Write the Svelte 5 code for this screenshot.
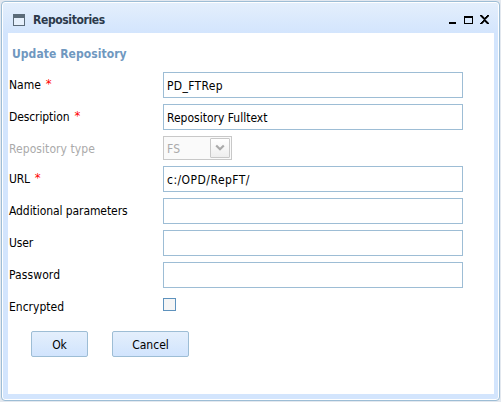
<script>
  const rows = [
    { label: 'Name', required: true, value: 'PD_FTRep', ls: 0, vs: 0.35 },
    { label: 'Description', required: true, value: 'Repository Fulltext', ls: -0.1, vs: 0 },
    { label: 'Repository type', kind: 'select', value: 'FS', ls: 0.07, vs: 0.3 },
    { label: 'URL', required: true, value: 'c:/OPD/RepFT/', ls: -0.2, vs: 0.47 },
    { label: 'Additional parameters', value: '', ls: -0.08, vs: 0 },
    { label: 'User', value: '', ls: -0.1, vs: 0 },
    { label: 'Password', value: '', ls: 0.1, vs: 0 },
    { label: 'Encrypted', kind: 'check', ls: 0, vs: 0 }
  ];
</script>

<div class="page">
  <div class="window">
    <header>
      <svg class="app" width="12" height="12" shape-rendering="crispEdges"><rect width="12" height="12" fill="#5b6b79"/><rect x="1" y="4" width="10" height="7" fill="#e6f0fc"/></svg>
      <span class="title">Repositories</span>
      <svg class="controls" width="40" height="9" shape-rendering="crispEdges">
        <path d="M0 7h7v2H0z" fill="#000"/>
        <path fill-rule="evenodd" d="M15 1h9v8h-9zM16 3v5h7V3z" fill="#000"/>
        <path d="M31 0h2v1h1v1h1v1h1v-1h1v-1h1v-1h2v1h-1v1h-1v1h-1v1h-1v1h1v1h1v1h1v1h1v1h-2v-1h-1v-1h-1v-1h-1v1h-1v1h-1v1h-2v-1h1v-1h1v-1h1v-1h1v-1h-1v-1h-1v-1h-1v-1h-1z" fill="#000" stroke="#000" stroke-width=".4"/>
      </svg>
    </header>
    <main>
      <h1>Update Repository</h1>
      <div class="form">
        {#each rows as r}
          <div class="row {r.kind ?? 'text'}">
            <div class="label"><span style:letter-spacing="{r.ls}px">{r.label}</span>{#if r.required}<span class="star">*</span>{/if}</div>
            {#if r.kind === 'select'}
              <div class="combo"><span style:letter-spacing="{r.vs}px">{r.value}</span><i><svg width="10" height="8"><path d="M1.2 1.5L5 5.3L8.800 1.5" fill="none" stroke="#aaa" stroke-width="2.2"/></svg></i></div>
            {:else if r.kind === 'check'}
              <div class="box"></div>
            {:else}
              <div class="field" style:letter-spacing="{r.vs}px">{r.value}</div>
            {/if}
          </div>
        {/each}
      </div>
      <div class="buttons"><button class="ok">Ok</button><button class="cancel">Cancel</button></div>
    </main>
  </div>
</div>

<style>
  .page { box-sizing: border-box; width: 501px; height: 402px; padding: 1px; background: #e3e8ef; overflow: hidden; font: 12px "DejaVu Sans Condensed", "DejaVu Sans", sans-serif; font-stretch: condensed; color: #000; }
  .window { box-sizing: border-box; height: 400px; border: 1px solid #9dbdd5; border-radius: 4px; padding: 0 4px 5px 6px; background: linear-gradient(#e4effc, #d3e5fd 31px); box-shadow: inset 0 0 0 1px #fff; }
  header { display: flex; align-items: center; height: 31px; box-sizing: border-box; padding: 4px 6px 0 5px; }
  .title { flex: 1; margin-left: 8px; font-weight: bold; letter-spacing: -0.37px; color: #2c3a4b; }
  main { box-sizing: border-box; height: 361px; margin-right: 1px; background: #fff; padding-left: 1px; }
  h1 { margin: 0; padding: 12px 0 0 3px; height: 27px; font-size: 12px; line-height: 18px; letter-spacing: 0.06px; color: #7098bf; }
  .form { display: flex; flex-direction: column; }
  .row { display: flex; height: 26px; margin-bottom: 6px; }
  .row.select { height: 24px; color: #aaa; }
  .row.check { margin: 0; }
  .label { width: 154px; line-height: 26px; white-space: nowrap; }
  .star { color: #f00; margin-left: 5px; font-size: 13px; line-height: 1; vertical-align: 1px; }
  .field { box-sizing: border-box; width: 300px; height: 26px; border: 1px solid #9dbdd5; padding-left: 3px; line-height: 26px; white-space: nowrap; }
  .combo { display: flex; justify-content: space-between; box-sizing: border-box; width: 69px; height: 24px; border: 1px solid #c8c8c8; background: #fafafa; padding: 1px 1px 1px 3px; line-height: 22px; }
  .combo i { display: flex; align-items: center; justify-content: center; box-sizing: border-box; width: 20px; height: 20px; border: 1px solid #c8c8c8; border-radius: 1px; background: linear-gradient(#fff, #eee); }
  .box { box-sizing: border-box; width: 13px; height: 13px; margin-top: 4px; border: 1px solid #5e92bd; background: #f5f5f5; }
  .buttons { display: flex; gap: 24px; padding: 11px 0 0 22px; }
  button { box-sizing: border-box; height: 26px; padding: 1px 0 0; border: 1px solid #9dbdd5; border-radius: 2px; background: linear-gradient(#e4effc, #d1e4fd); font: inherit; color: #000; }
  .ok { width: 57px; }
  .cancel { width: 77px; }
</style>
